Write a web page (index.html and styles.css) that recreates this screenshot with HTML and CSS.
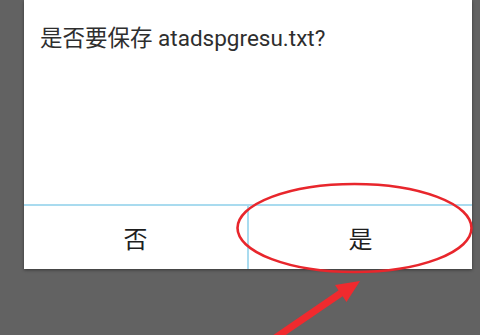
FILE: index.html
```html
<!DOCTYPE html>
<html lang="zh-CN">
<head>
<meta charset="utf-8">
<link rel="stylesheet" href="styles.css">
</head>
<body>
<div class="screen">
  <div class="dialog">
    <div class="message">是否要保存 atadspgresu.txt?</div>
    <div class="actions">
      <div class="btn">否</div>
      <div class="btn btn-yes">是</div>
    </div>
  </div>
  <svg class="annot" width="480" height="335" viewBox="0 0 480 335">
    <ellipse cx="354.5" cy="228" rx="117" ry="44" fill="none" stroke="#e8262c" stroke-width="2.6"/>
    <line x1="341" y1="293" x2="262" y2="347" stroke="#f02a2e" stroke-width="7"/>
    <polygon points="360,281 335,285 346.5,302" fill="#f02a2e"/>
  </svg>
</div>
</body>
</html>
```
FILE: styles.css
```css
html, body {
  margin: 0;
  padding: 0;
}
body {
  background: #626262;
  font-family: Roboto, "Noto Sans CJK SC", sans-serif;
}
.screen {
  position: relative;
  width: 480px;
  height: 335px;
  overflow: hidden;
}
.dialog {
  margin-left: 24px;
  width: 448px;
  height: 269px;
  background: #ffffff;
  display: flex;
  flex-direction: column;
  box-shadow: 0 1px 3px rgba(0,0,0,0.45);
}
.message {
  flex: 1;
  padding: 24px 0 0 16px;
  font-size: 22.5px;
  line-height: 28px;
  color: #2e2e2e;
}
.actions {
  height: 63px;
  border-top: 2px solid #a9dbef;
  display: flex;
}
.btn {
  flex: 1;
  display: flex;
  align-items: center;
  justify-content: center;
  font-size: 24px;
  font-weight: 400;
  color: #1e1e1e;
  font-family: "Noto Sans CJK SC", sans-serif;
}
.btn-yes {
  border-left: 2px solid #a9dbef;
}
.annot {
  position: absolute;
  left: 0;
  top: 0;
}
```
